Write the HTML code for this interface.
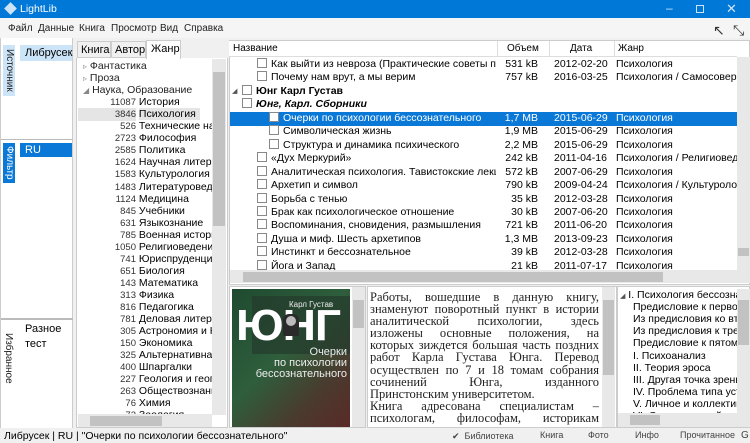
<!DOCTYPE html>
<html><head><meta charset="utf-8"><style>
*{margin:0;padding:0;box-sizing:border-box}
body{width:750px;height:443px;overflow:hidden;background:#f0f0f0;font-family:"Liberation Sans","DejaVu Sans",sans-serif;font-size:10px;color:#000;position:relative}
.a{position:absolute;white-space:nowrap}
.vt{position:absolute;writing-mode:vertical-rl;font-size:10px;text-align:center}
.row{position:absolute;left:0;height:13px;line-height:13px;white-space:nowrap}
.cb{display:inline-block;width:10px;height:10px;border:1px solid #888;background:#fff;vertical-align:-1px;margin-right:4px}
.sb{position:absolute;background:#e8e8e8}
.th{position:absolute;background:#c2c2c2}
</style></head><body>
<div class="a" style="left:0;top:0;width:750px;height:18px;background:#0078d7"></div>
<div class="a" style="left:6px;top:4px;width:9px;height:9px;background:#cfe3f7;transform:rotate(45deg)"></div>
<div class="a" style="left:20px;top:3px;color:#fff;font-size:10.5px">LightLib</div>
<div class="a" style="left:666px;top:1px;color:#cfe3f7;font-size:12px">–</div>
<div class="a" style="left:696px;top:5px;width:8px;height:8px;border:1px solid #cfe3f7"></div>
<div class="a" style="left:726px;top:1px;color:#cfe3f7;font-size:13px">✕</div>
<div class="a" style="left:0;top:18px;width:750px;height:20px;background:#f5f5f5"></div>
<div class="a" style="left:8px;top:23px;color:#222">Файл</div>
<div class="a" style="left:38px;top:23px;color:#222">Данные</div>
<div class="a" style="left:79px;top:23px;color:#222">Книга</div>
<div class="a" style="left:111px;top:23px;color:#222">Просмотр</div>
<div class="a" style="left:160px;top:23px;color:#222">Вид</div>
<div class="a" style="left:184px;top:23px;color:#222">Справка</div>
<div class="a" style="left:713px;top:22px;font-size:14px;color:#333">↖</div>
<div class="a" style="left:733px;top:22px;font-size:14px;color:#333">⤡</div>
<div class="a" style="left:0;top:38px;width:73px;height:390px;background:#fff;border-right:1px solid #ccc"></div>
<div class="vt" style="left:3px;top:45px;width:12px;height:51px;background:#cce4f7;color:#222">Источник</div>
<div class="a" style="left:20px;top:45px;width:52px;height:16px;background:#cce4f7"></div>
<div class="a" style="left:25px;top:47px;font-size:11px">Либрусек</div>
<div class="a" style="left:0;top:139px;width:73px;height:1px;background:#bbb"></div>
<div class="vt" style="left:3px;top:143px;width:12px;height:40px;background:#0a78d7;color:#fff">Фильтр</div>
<div class="a" style="left:20px;top:143px;width:52px;height:14px;background:#0a78d7"></div>
<div class="a" style="left:25px;top:144px;color:#fff;font-size:11px">RU</div>
<div class="a" style="left:0;top:318px;width:73px;height:2px;background:#bbb"></div>
<div class="vt" style="left:2px;top:322px;width:12px;height:72px;color:#222">Избранное</div>
<div class="a" style="left:25px;top:323px;font-size:11px">Разное</div>
<div class="a" style="left:25px;top:338px;font-size:11px">тест</div>
<div class="a" style="left:0;top:38px;width:1px;height:390px;background:#ccc"></div>
<div class="a" style="left:76px;top:40px;width:152px;height:388px;background:#fff;border:1px solid #ccc"></div>
<div class="a" style="left:76px;top:40px;width:152px;height:18px;background:#f0f0f0"></div>
<div class="a" style="left:77px;top:41px;width:34px;height:17px;border:1px solid #ccc;background:#f0f0f0;padding:2px 3px;font-size:11px">Книга</div>
<div class="a" style="left:111px;top:41px;width:35px;height:17px;border:1px solid #ccc;background:#f0f0f0;padding:2px 3px;font-size:11px">Автор</div>
<div class="a" style="left:146px;top:40px;width:35px;height:19px;border:1px solid #ccc;border-bottom:none;background:#fff;padding:2px 4px;font-size:11px">Жанр</div>
<div id="g" class="a" style="left:78px;top:59px;width:134px;height:356px;overflow:hidden"></div>
<div class="sb" style="left:212px;top:59px;width:14px;height:356px"></div>
<div class="th" style="left:213px;top:72px;width:12px;height:154px"></div>
<div class="sb" style="left:78px;top:414px;width:134px;height:13px"></div>
<div class="th" style="left:90px;top:416px;width:72px;height:10px"></div>
<div class="a" style="left:229px;top:40px;width:521px;height:245px;background:#fff;border:1px solid #ccc"></div>
<div class="a" style="left:229px;top:41px;width:508px;height:16px;background:#fff;border-bottom:1px solid #ddd"></div>
<div class="a" style="left:233px;top:43px">Название</div>
<div class="a" style="left:497px;top:41px;width:1px;height:15px;background:#ddd"></div>
<div class="a" style="left:507px;top:43px">Объем</div>
<div class="a" style="left:549px;top:41px;width:1px;height:15px;background:#ddd"></div>
<div class="a" style="left:570px;top:43px">Дата</div>
<div class="a" style="left:614px;top:41px;width:1px;height:15px;background:#ddd"></div>
<div class="a" style="left:618px;top:43px">Жанр</div>
<div id="b" class="a" style="left:230px;top:57px;width:507px;height:213px;overflow:hidden"></div>
<div class="sb" style="left:737px;top:57px;width:13px;height:213px"></div>
<div class="th" style="left:738px;top:248px;width:11px;height:8px"></div>
<div class="sb" style="left:230px;top:270px;width:520px;height:13px"></div>
<div class="th" style="left:243px;top:272px;width:420px;height:10px"></div>
<div class="a" style="left:229px;top:286px;width:137px;height:142px;background:#fff;border:1px solid #ccc"></div>
<div class="a" style="left:232px;top:289px;width:118px;height:138px;background:linear-gradient(135deg,#1f4a30 0%,#2e5e3c 45%,#4a3a2e 75%,#5a2a28 100%)"></div>
<div class="a" style="left:252px;top:296px;width:98px;height:58px;background:#243a2c;opacity:.7"></div>
<div class="a" style="left:289px;top:300px;color:#eee;font-size:8px">Карл Густав</div>
<div class="a" style="left:236px;top:304px;color:#fff;font-size:44px;font-weight:bold;letter-spacing:-1px;line-height:44px;transform:scaleX(1.05);transform-origin:left">ЮНГ</div>
<div class="a" style="left:283px;top:314px;width:16px;height:22px;background:#2a2a2a;border-radius:6px 6px 2px 2px"></div>
<div class="a" style="left:286px;top:316px;width:10px;height:10px;background:#bbb;border-radius:50%"></div>
<div class="a" style="left:232px;top:347px;width:115px;text-align:right;color:#eee;font-size:11px;line-height:11px">Очерки<br>по психологии<br>бессознательного</div>
<div class="sb" style="left:352px;top:287px;width:13px;height:140px"></div>
<div class="th" style="left:353px;top:300px;width:11px;height:28px"></div>
<div class="a" style="left:367px;top:286px;width:250px;height:142px;background:#fff;border:1px solid #ccc"></div>
<div class="a" style="left:370px;top:291px;width:229px;height:136px;overflow:hidden;font-family:'Liberation Serif',serif;font-size:12.5px;line-height:12.1px;text-align:justify;color:#222">
<div style="text-align-last:justify">Работы, вошедшие в данную книгу,</div>
<div style="text-align-last:justify">знаменуют поворотный пункт в истории</div>
<div style="text-align-last:justify">аналитической психологии, здесь</div>
<div style="text-align-last:justify">изложены основные положения, на</div>
<div style="text-align-last:justify">которых зиждется большая часть поздних</div>
<div style="text-align-last:justify">работ Карла Густава Юнга. Перевод</div>
<div style="text-align-last:justify">осуществлен по 7 и 18 томам собрания</div>
<div style="text-align-last:justify">сочинений Юнга, изданного</div>
<div>Принстонским университетом.</div>
<div style="text-align-last:justify">Книга адресована специалистам –</div>
<div style="text-align-last:justify">психологам, философам, историкам</div>
</div>
<div class="sb" style="left:602px;top:287px;width:13px;height:140px"></div>
<div class="th" style="left:603px;top:300px;width:11px;height:75px"></div>
<div class="a" style="left:617px;top:286px;width:133px;height:142px;background:#fff;border:1px solid #ccc"></div>
<div id="c" class="a" style="left:620px;top:289px;width:117px;height:124px;overflow:hidden"></div>
<div class="sb" style="left:737px;top:289px;width:13px;height:124px"></div>
<div class="th" style="left:738px;top:300px;width:11px;height:45px"></div>
<div class="sb" style="left:618px;top:413px;width:132px;height:14px"></div>
<div class="th" style="left:630px;top:415px;width:30px;height:10px"></div>
<div class="a" style="left:0;top:428px;width:750px;height:15px;background:#f0f0f0"></div>
<div class="a" style="left:4px;top:430px;font-size:10.5px">Либрусек | RU | "Очерки по психологии бессознательного"</div>
<div class="a" style="left:452px;top:431px;font-size:9px;color:#444">✔&nbsp; Библиотека</div>
<div class="a" style="left:540px;top:430px;font-size:9px;color:#444">Книга</div>
<div class="a" style="left:588px;top:430px;font-size:9px;color:#444">Фото</div>
<div class="a" style="left:635px;top:430px;font-size:9px;color:#444">Инфо</div>
<div class="a" style="left:680px;top:430px;font-size:9px;color:#444">Прочитанное</div>
<div class="a" style="left:741px;top:430px;font-size:10px;color:#444">G</div>
<script>
var g=[["▹ Фантастика",5],["▹ Проза",5],["◢ Наука, Образование",5],
["11087","История"],["3846","Психология",1],["526","Технические науки"],["2723","Философия"],["2585","Политика"],["1624","Научная литература"],["1583","Культурология"],["1483","Литературоведение"],["1124","Медицина"],["845","Учебники"],["631","Языкознание"],["785","Военная история"],["1050","Религиоведение"],["741","Юриспруденция"],["651","Биология"],["143","Математика"],["313","Физика"],["816","Педагогика"],["781","Деловая литература"],["305","Астрономия и Космос"],["150","Экономика"],["325","Альтернативная медицина"],["400","Шпаргалки"],["227","Геология и география"],["263","Обществознание"],["76","Химия"],["72","Зоология"]];
var h="";g.forEach(function(r,i){var t=1+i*12.05;
if(typeof r[1]=="number")h+='<div class="row" style="top:'+t+'px;left:'+r[1]+'px;font-size:10.5px;color:#222">'+r[0].replace(/^(.)/,'<span style="color:#888;font-size:8px">$1</span>')+'</div>';
else h+='<div class="row" style="top:'+t+'px;width:134px;font-size:10.5px"><span style="display:inline-block;width:58px;text-align:right;font-size:9.5px;color:#333'+(r[2]?';background:#e5e5e5;padding-left:8px;margin-left:-8px;width:66px':'')+'">'+r[0]+'</span> <span'+(r[2]?' style="background:#e5e5e5;padding-right:4px"':'')+'>'+r[1]+'</span></div>';});
document.getElementById('g').innerHTML=h;
var b=[[27,"Как выйти из невроза (Практические советы психолога)","531 kB","2012-02-20","Психология"],[27,"Почему нам врут, а мы верим","757 kB","2016-03-25","Психология / Самосовершенствование"],[0,"Юнг Карл Густав","","","",1],[12,"Юнг, Карл. Сборники","","","",2],[39,"Очерки по психологии бессознательного","1,7 MB","2015-06-29","Психология",3],[39,"Символическая жизнь","1,9 MB","2015-06-29","Психология"],[39,"Структура и динамика психического","2,2 MB","2015-06-29","Психология"],[27,"«Дух Меркурий»","242 kB","2011-04-16","Психология / Религиоведение"],[27,"Аналитическая психология. Тавистокские лекции","572 kB","2007-06-29","Психология"],[27,"Архетип и символ","790 kB","2009-04-24","Психология / Культурология"],[27,"Борьба с тенью","35 kB","2012-03-28","Психология"],[27,"Брак как психологическое отношение","30 kB","2007-06-20","Психология"],[27,"Воспоминания, сновидения, размышления","721 kB","2011-06-20","Психология"],[27,"Душа и миф. Шесть архетипов","1,3 MB","2013-09-23","Психология"],[27,"Инстинкт и бессознательное","39 kB","2012-03-28","Психология"],[27,"Йога и Запад","21 kB","2011-07-17","Психология"]];
h="";b.forEach(function(r,i){var t=1+i*13.45,s=r[5]==3,c=s?'#fff':'#000';
h+='<div class="row" style="top:'+t+'px;width:507px;height:14px;font-size:10.5px;'+(s?'background:#0a78d7;':'')+'color:'+c+'">';
var tri=r[5]==1||r[5]==2?'<span style="position:absolute;left:'+(r[0]+2)+'px;font-size:7px;color:#555">◢</span>':'';
var L=r[5]==1?12:r[0];
h+=tri+'<div style="position:absolute;left:'+L+'px;top:0;width:'+(266-L)+'px;overflow:hidden;'+(r[5]==1?'font-weight:bold;':'')+(r[5]==2?'font-weight:bold;font-style:italic;':'')+'"><span class="cb"></span>'+r[1]+'</div>';
if(r[2]){
h+='<div style="position:absolute;left:270px;width:38px;text-align:right">'+r[2]+'</div><div style="position:absolute;left:324px">'+r[3]+'</div><div style="position:absolute;left:386px;width:121px;overflow:hidden">'+r[4]+'</div>';}
h+='</div>';});
document.getElementById('b').innerHTML=h;
var c=["I. Психология бессознательного","Предисловие к первому","Из предисловия ко второму","Из предисловия к третьему","Предисловие к пятому","I. Психоанализ","II. Теория эроса","III. Другая точка зрения","IV. Проблема типа установки","V. Личное и коллективное","VI. Синтетический, или"];
h="";c.forEach(function(x,i){h+='<div class="row" style="top:'+(i*12.1)+'px;left:'+(i?13:0)+'px;font-size:10.5px">'+(i?'':'<span style="font-size:7px;color:#555">◢</span> ')+x+'</div>';});
document.getElementById('c').innerHTML=h;
</script>
</body></html>
